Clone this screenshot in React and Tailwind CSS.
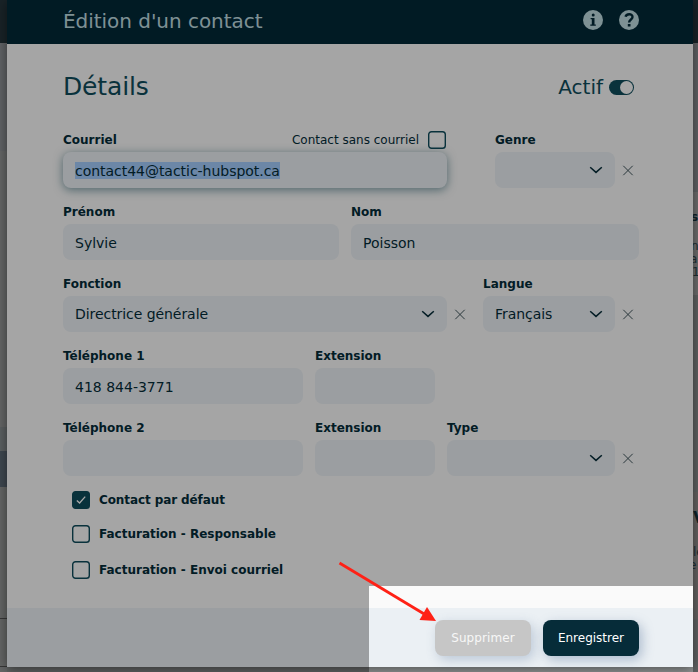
import React from 'react';

function Label({ children }) {
  return <div className="h-[23px] pt-[3px] text-[12px] leading-[16px] font-bold whitespace-nowrap">{children}</div>;
}

function Field({ label, className, children, select, clear, value }) {
  return (
    <div className="flex items-end">
      <div className={className}>
        {children || <Label>{label}</Label>}
        <div className="flex h-9 items-center justify-between rounded-[8px] bg-[#ebf0f4] px-3 text-[14px]">
          <span className={select ? 'tracking-[-0.06px]' : 'pt-[2px]'}>{value}</span>
          {select && (
            <svg className="h-3 w-3.5" viewBox="0 0 14 12" fill="none" stroke="#062c39" strokeWidth="1.5">
              <path d="M1.2 3.2 L7 8.4 L12.8 3.2" />
            </svg>
          )}
        </div>
      </div>
      {clear && (
        <div className="flex h-9 w-[25px] items-center justify-center">
          <svg className="h-3 w-3" viewBox="0 0 12 12" stroke="#40545c" strokeWidth="1">
            <path d="M1.3 1.8 L10.7 11.2 M10.7 1.8 L1.3 11.2" />
          </svg>
        </div>
      )}
    </div>
  );
}

function Box({ checked }) {
  return (
    <svg className="h-[18px] w-[18px] shrink-0" viewBox="0 0 18 18" fill="none">
      <rect x="0.7" y="0.7" width="16.6" height="16.6" rx="2.8" stroke="#0f4c5c" strokeWidth="1.4" fill={checked ? '#0f4c5c' : 'none'} />
      {checked && <path d="M4.8 9.4 L7.6 12 L13.2 5.6" stroke="#fff" strokeWidth="1.3" />}
    </svg>
  );
}

function LeftEdge() {
  return (
    <div className="flex w-[7px] flex-col">
      <div className="h-[43px] bg-[#26363d]" />
      <div className="h-[108px] bg-[#95989c]" />
      <div className="h-[276px] bg-[#9b9d9d]" />
      <div className="h-6 bg-[#8d9496]" />
      <div className="h-9 bg-[#606e7b]" />
      <div className="h-[132px] border-b border-[#555] bg-[#9b9d9c]" />
      <div className="h-12 border-b border-[#555] bg-[#9b9d9c]" />
      <div className="h-[5px] bg-[#9b9d9e]" />
    </div>
  );
}

function RightEdge() {
  return (
    <div className="flex w-[5px] flex-col overflow-hidden text-[12px] text-[#2e474f]">
      <div className="h-[43px] bg-[#26363d]" />
      <div className="h-[149px] bg-[#95989c]" />
      <div className="h-[103px] bg-[#a8a8a8] pt-[19px] leading-[13px]">
        <div className="-ml-[2px] h-[29px] font-bold text-[#17343e]">s</div>
        <div className="-ml-[2px]">n</div>
        <div className="-ml-[3px]">a</div>
        <div className="-ml-[1px]">1</div>
      </div>
      <div className="h-[197px] bg-[#939797]" />
      <div className="h-[127px] bg-[#9b9896] pt-[17px] leading-[13px]">
        <div className="h-[37px] text-[16px] leading-[18px] font-bold text-[#17343e]">V</div>
        <div>le</div>
        <div className="-ml-[4px]">e</div>
      </div>
      <div className="grow bg-[#939798]" />
    </div>
  );
}

export default function App() {
  return (
    <div className="relative flex h-[672px] w-[698px] overflow-hidden bg-[#949797] font-['DejaVu_Sans',Verdana,sans-serif] text-[#042c39]">
      <LeftEdge />
      <main className="z-10 flex h-[667px] w-[686px] flex-col bg-[#fafafa] shadow-[0_2px_12px_rgba(0,0,0,0.5)]">
        <header className="flex h-11 shrink-0 items-start justify-between bg-[#032937] pr-[54px] pl-14 text-[#c0dde1]">
          <h1 className="pt-[7px] text-[20px] leading-[28px] tracking-[-0.04px]">Édition d'un contact</h1>
          <div className="flex gap-4 pt-[10px]">
            <svg className="h-5 w-5" viewBox="0 0 20 20">
              <circle cx="10" cy="10" r="10" fill="#c0dde1" />
              <circle cx="10.2" cy="5.1" r="1.5" fill="#032937" />
              <path d="M7.6 8 H11.5 V14.5 H12.8 V15.7 H7.3 V14.5 H8.8 V9.2 H7.6 Z" fill="#032937" />
            </svg>
            <svg className="h-5 w-5" viewBox="0 0 20 20">
              <circle cx="10" cy="10" r="10" fill="#c0dde1" />
              <path d="M6.6 6.8 C7.2 3.4 13.5 3.2 13.5 7 C13.5 9.6 10.1 9.4 10.1 12.6" fill="none" stroke="#032937" strokeWidth="2.4" />
              <rect x="8.8" y="14" width="2.7" height="2.5" fill="#032937" />
            </svg>
          </div>
        </header>

        <section className="h-[564px] shrink-0 pl-14">
          <div className="flex h-[85px] w-[571px] items-start justify-between text-[#0f4c5c]">
            <h2 className="pt-[27px] text-[25px] leading-[32px] tracking-[-0.15px]">Détails</h2>
            <div className="flex items-center gap-[6px] pt-[29px]">
              <span className="text-[20px] leading-[28px]">Actif</span>
              <span className="flex h-[15px] w-[25px] items-center justify-end rounded-full bg-[#0f4c5c] p-px">
                <span className="h-[13px] w-[13px] rounded-full bg-[#fafafa]" />
              </span>
            </div>
          </div>

          <div className="flex flex-col gap-[13px]">
            <div className="flex gap-12">
              <div className="w-[384px]">
                <div className="flex h-[23px] justify-between">
                  <Label>Courriel</Label>
                  <div className="flex items-start gap-[9px] pr-px pt-[2px] text-[12px]">
                    <span className="pt-px leading-[16px]">Contact sans courriel</span>
                    <Box />
                  </div>
                </div>
                <div className="flex h-9 items-center rounded-[8px] bg-[#ebf0f4] px-3 text-[14px] shadow-[0_2px_10px_rgba(15,76,92,0.55)]">
                  <span className="mt-px bg-[#a5cdfd] pt-px leading-[16px] tracking-[-0.03px]">contact44@tactic-hubspot.ca</span>
                </div>
              </div>
              <Field label="Genre" className="w-[120px]" select clear />
            </div>
            <div className="flex gap-3">
              <Field label="Prénom" className="w-[276px]" value="Sylvie" />
              <Field label="Nom" className="w-[288px]" value="Poisson" />
            </div>
            <div className="flex gap-[11px]">
              <Field label="Fonction" className="w-[384px]" value="Directrice générale" select clear />
              <Field label="Langue" className="w-[132px]" value="Français" select clear />
            </div>
            <div className="flex gap-3">
              <Field label="Téléphone 1" className="w-[240px]" value="418 844-3771" />
              <Field label="Extension" className="w-[120px]" />
            </div>
            <div className="flex gap-3">
              <Field label="Téléphone 2" className="w-[240px]" />
              <Field label="Extension" className="w-[120px]" />
              <Field label="Type" className="w-[168px]" select clear />
            </div>
          </div>

          <div className="pt-[15px] pl-[9px] text-[12px] leading-[18px] font-bold">
            <div className="flex h-[34px] gap-[9px]"><Box checked /><span className="tracking-[-0.1px]">Contact par défaut</span></div>
            <div className="flex h-9 gap-[9px]"><Box /><span>Facturation - Responsable</span></div>
            <div className="flex gap-[9px]"><Box /><span>Facturation - Envoi courriel</span></div>
          </div>
        </section>

        <footer className="flex grow items-start justify-end gap-3 bg-[#ebf0f4] pt-3 pr-[54px] text-[12px] text-white">
          <button className="h-9 w-24 rounded-[8px] bg-[#c6c6c6] tracking-[0.1px] text-[#f7f7f7] shadow-[3px_4px_12px_rgba(80,110,150,0.3)]">Supprimer</button>
          <button className="h-9 w-24 rounded-[8px] bg-[#062c39] shadow-[3px_4px_12px_rgba(80,110,150,0.4)]">Enregistrer</button>
        </footer>
      </main>
      <RightEdge />

      <div className="absolute top-[586px] left-[369px] z-20 h-[86px] w-[324px] shadow-[0_0_0_1000px_rgba(0,0,0,0.34)]" />
      <svg className="absolute top-[555px] left-[330px] z-30 h-[75px] w-[115px]" viewBox="330 555 115 75">
        <path d="M339.5 563 L425 614.5" stroke="#ff2116" strokeWidth="2.8" />
        <path d="M436 621 L419.5 620 L427 607 Z" fill="#ff2116" />
      </svg>
    </div>
  );
}
